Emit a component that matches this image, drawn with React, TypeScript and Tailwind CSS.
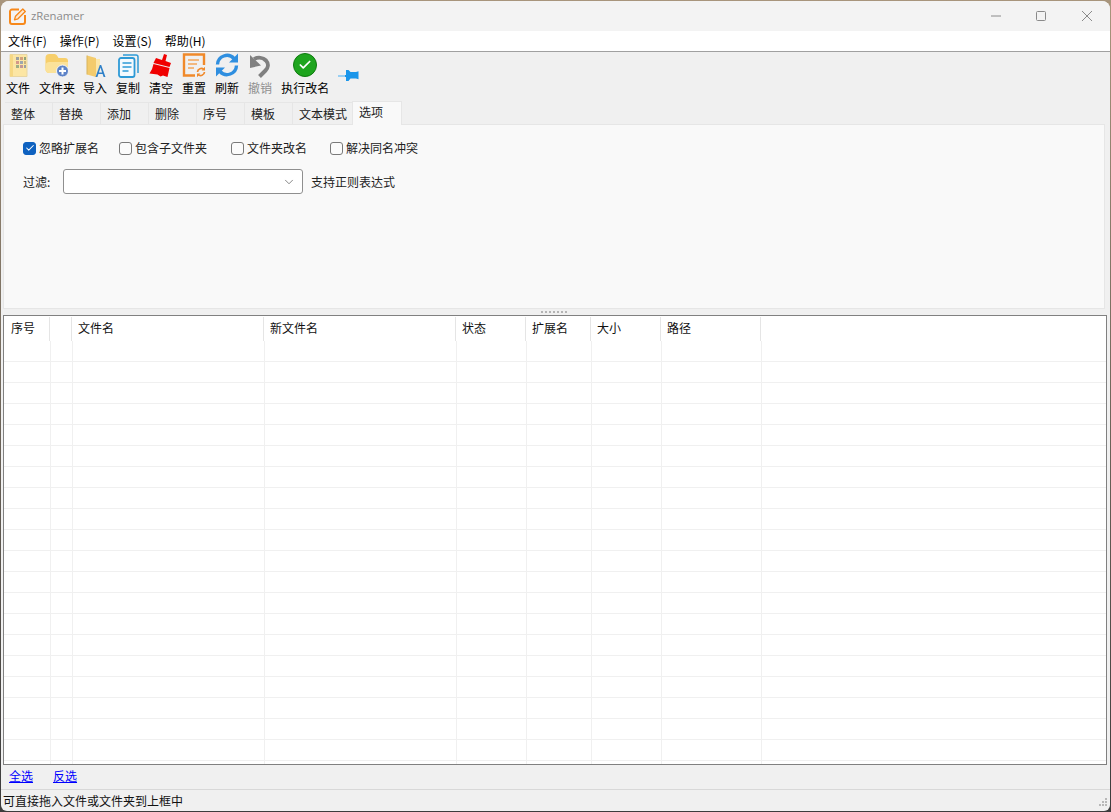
import { Check, ChevronDown } from 'lucide-react';

const cjk = "font-['Noto_Sans_CJK_SC','Noto_Sans',sans-serif]";

const tabs = ['整体', '替换', '添加', '删除', '序号', '模板'];

const headerCols = [
  { label: '序号', cls: 'w-[46px] pl-[7px]' },
  { label: '', cls: 'w-[22px] pl-[6px]' },
  { label: '文件名', cls: 'w-[192px] pl-[6px]' },
  { label: '新文件名', cls: 'w-[192px] pl-[6px]' },
  { label: '状态', cls: 'w-[70px] pl-[6px]' },
  { label: '扩展名', cls: 'w-[65px] pl-[6px]' },
  { label: '大小', cls: 'w-[70px] pl-[6px]' },
  { label: '路径', cls: 'w-[100px] pl-[6px]' },
];

const bodyCols = ['w-[47px]', 'w-[22px]', 'w-[192px]', 'w-[192px]', 'w-[70px]', 'w-[65px]', 'w-[70px]', 'w-[100px]'];

const rows = Array.from({ length: 21 }, (_, i) => i);

function AppLogo() {
  return (
    <svg width="17" height="17" viewBox="0 0 17 17" fill="none">
      <path d="M10 1.500H3A2 2 0 0 0 1 3.500V14a2 2 0 0 0 2 2h11a2 2 0 0 0 2-2V7" stroke="#f7881a" strokeWidth="2" />
      <path d="M13.800 1 6.500 8.300 5.500 11.800 9 10.800 16.300 3.500Z" fill="#fde7cf" stroke="#f7881a" strokeWidth="1.300" strokeLinejoin="round" />
    </svg>
  );
}

function FileIcon() {
  return (
    <svg width="24" height="26" viewBox="0 0 24 26">
      <path d="M4 2.500h17v22H4z" fill="#fce6a4" stroke="#e8d6a4" />
      <path d="M4 2.500h3v22H4z" fill="#f6d884" />
      <g opacity="0.75">
        <rect x="10" y="5" width="3" height="3" fill="#7c8aa0" />
        <rect x="14" y="5" width="3" height="3" fill="#c78a72" />
        <rect x="18" y="5" width="2" height="3" fill="#6f8f6a" />
        <rect x="10" y="9" width="3" height="3" fill="#c77f7f" />
        <rect x="14" y="9" width="3" height="3" fill="#7d93b5" />
        <rect x="18" y="9" width="2" height="3" fill="#b7a070" />
        <rect x="10" y="13" width="3" height="3" fill="#7f9d7b" />
        <rect x="14" y="13" width="3" height="3" fill="#b07f95" />
        <rect x="18" y="13" width="2" height="3" fill="#7c8aa0" />
      </g>
    </svg>
  );
}

function FolderIcon() {
  return (
    <svg width="26" height="26" viewBox="0 0 26 26">
      <path d="M1.500 6a4 4 0 0 1 4-4h5a3 3 0 0 1 2.500 1.500L14.500 6h6.500a3 3 0 0 1 3 3v12H5.500a4 4 0 0 1-4-4Z" fill="#f7cf6b" />
      <path d="M5.500 10H24v11H5.500a4 4 0 0 1-4-4v-3a4 4 0 0 1 4-4Z" fill="#fbe29a" />
      <circle cx="18.500" cy="19" r="6" fill="#5d83c8" stroke="#f4f4f4" strokeWidth="1" />
      <path d="M15 19h7M18.500 15.500v7" stroke="#fff" strokeWidth="2" />
    </svg>
  );
}

function ImportIcon() {
  return (
    <svg width="24" height="26" viewBox="0 0 24 26">
      <path d="M4 3.500 13 6v19l-9-2.500Z" fill="#f3cb6c" />
      <path d="M13 7h4v7l-4 9Z" fill="#fbe6a8" />
      <path d="M4 3.500v19" stroke="#d9b45c" strokeWidth="1" />
      <path d="M12.500 25 16.800 13h1.400L22.500 25h-1.900l-1-3h-4.200l-1 3Zm3.400-4.600h3.200L17.500 15.500Z" fill="#2f80c8" />
    </svg>
  );
}

function CopyIcon() {
  return (
    <svg width="24" height="26" viewBox="0 0 24 26" fill="none">
      <path d="M7 3h13a2 2 0 0 1 2 2v16" stroke="#2e9ad6" strokeWidth="1.500" />
      <rect x="3" y="6" width="15.500" height="19" rx="2" stroke="#2e9ad6" strokeWidth="1.800" fill="#f4fafe" />
      <path d="M6.500 11h9M6.500 15h9M6.500 19h6" stroke="#2e9ad6" strokeWidth="1.600" />
    </svg>
  );
}

function BroomIcon() {
  return (
    <svg width="24" height="26" viewBox="0 0 24 26">
      <path d="M13 8 15 2 18 3 16.500 9 22 11 20.500 15 4.500 11 7 6Z" fill="#f00000" />
      <path d="M4.500 12 20.500 16 18.500 25 14 23.500 11.500 24.500 8.500 22.500 0.500 21.500Q3.500 17.500 4.500 12Z" fill="#f00000" />
    </svg>
  );
}

function ResetIcon() {
  return (
    <svg width="24" height="26" viewBox="0 0 24 26" fill="none">
      <path d="M22 13V2.500H2v21h11" stroke="#f0892a" strokeWidth="2.400" />
      <path d="M6 8h11M6 12h9M6 16h6" stroke="#f4a558" strokeWidth="1.600" />
      <path d="M15.500 20a3.800 3.800 0 0 1 6.400-2.500M22.500 20a3.800 3.800 0 0 1-6.400 2.500" stroke="#f0892a" strokeWidth="1.700" />
      <path d="M23 14.800v3.600h-3.400zM15 25.200v-3.600h3.400z" fill="#f0892a" />
    </svg>
  );
}

function RefreshIcon() {
  return (
    <svg width="24" height="26" viewBox="0 0 24 26" fill="none">
      <path d="M2.500 12.500A9.500 9.500 0 0 1 19 6.500" stroke="#2f8fe0" strokeWidth="3.400" />
      <path d="M21.500 13.500A9.500 9.500 0 0 1 5 19.500" stroke="#2f8fe0" strokeWidth="3.400" />
      <path d="M23 1.500v9h-9zM1 24.500v-9h9z" fill="#2f8fe0" />
    </svg>
  );
}

function UndoIcon() {
  return (
    <svg width="24" height="26" viewBox="0 0 24 26" fill="none">
      <path d="M6 7c4-2 9-1.500 12 1.500 3 3.200 2 7.500-.5 10l-6 6" stroke="#808080" strokeWidth="4" />
      <path d="M2 3V16L13 13.500Z" fill="#808080" />
    </svg>
  );
}

function PinIcon() {
  return (
    <svg width="22" height="12" viewBox="0 0 22 12">
      <path d="M0 6h9" stroke="#7cc4f5" strokeWidth="1.400" />
      <path d="M7 6h6" stroke="#1a96ea" strokeWidth="2" />
      <path d="M8 0h2.500l2 2H18l2.500-.8v8L18 8.500h-5.500l-2 2.500H8Z" fill="#1a96ea" />
    </svg>
  );
}

function ToolButton({ icon, label, muted, cls }: { icon: React.ReactNode; label: string; muted?: boolean; cls?: string }) {
  return (
    <div className={`flex flex-col items-center ${cls ?? ''}`}>
      <div className="h-[26px] flex items-center justify-center">{icon}</div>
      <span className={`mt-[1px] text-[12px] leading-[18px] ${muted ? 'text-[#8f8f8f]' : 'text-black'}`}>{label}</span>
    </div>
  );
}

function Option({ label, checked, cls }: { label: string; checked?: boolean; cls: string }) {
  return (
    <div className={`flex items-center ${cls}`}>
      <span
        className={`w-[13px] h-[13px] rounded-[3px] flex items-center justify-center border ${
          checked ? 'bg-[#0f62c0] border-[#0f62c0]' : 'bg-[#fbfbfb] border-[#7a7a7a]'
        }`}
      >
        {checked && <Check size={10} strokeWidth={2.5} color="#ffffff" />}
      </span>
      <span className="ml-[3px] text-[12px] text-[#222]">{label}</span>
    </div>
  );
}

export default function App() {
  return (
    <div
      className={`w-[1111px] h-[812px] bg-linear-to-b from-[#a8957c] to-[#3c3c3c] overflow-hidden pt-[1px] px-[1px] pb-[1px] ${cjk}`}
    >
      <div className="w-full h-full rounded-t-[8px] rounded-b-[6px] overflow-hidden bg-[#f0f0f0] flex flex-col">
        {/* title bar */}
        <div className="h-[30px] shrink-0 bg-[#f3f3f3] flex items-center pl-[8px]">
          <AppLogo />
          <span className="ml-[5px] text-[11.3px] text-[#8b8b8b] font-['Open_Sans',sans-serif]">zRenamer</span>
          <div className="ml-auto flex items-center -mt-[1px]">
            <svg width="10" height="2" viewBox="0 0 10 2" className="mr-[35px]">
              <path d="M0 1h10" stroke="#8a8a8a" />
            </svg>
            <svg width="10" height="10" viewBox="0 0 10 10" className="mr-[36px]">
              <rect x="0.5" y="0.5" width="9" height="9" rx="1" fill="none" stroke="#8a8a8a" />
            </svg>
            <svg width="10" height="10" viewBox="0 0 10 10" className="mr-[18px]">
              <path d="M0 0l10 10M10 0 0 10" stroke="#8a8a8a" />
            </svg>
          </div>
        </div>

        {/* menu */}
        <div className="h-[21px] shrink-0 bg-white border-b border-[#a0a0a0] flex items-center pl-[7px] gap-[13px] text-[12px] text-black">
          <span>文件(F)</span>
          <span>操作(P)</span>
          <span>设置(S)</span>
          <span>帮助(H)</span>
        </div>

        {/* toolbar */}
        <div className="h-[48px] shrink-0 flex items-start pl-[5px] gap-[9px]">
          <ToolButton icon={<FileIcon />} label="文件" />
          <ToolButton icon={<FolderIcon />} label="文件夹" />
          <ToolButton icon={<ImportIcon />} label="导入" cls="-ml-[1px]" />
          <ToolButton icon={<CopyIcon />} label="复制" />
          <ToolButton icon={<BroomIcon />} label="清空" />
          <ToolButton icon={<ResetIcon />} label="重置" />
          <ToolButton icon={<RefreshIcon />} label="刷新" />
          <ToolButton icon={<UndoIcon />} label="撤销" muted />
          <ToolButton
            icon={
              <span className="w-[24px] h-[24px] rounded-full bg-[#1ea51e] border border-[#0f7a0f] flex items-center justify-center">
                <Check size={14} strokeWidth={3} color="#ffffff" />
              </span>
            }
            label="执行改名"
          />
          <div className="mt-[18px]">
            <PinIcon />
          </div>
        </div>

        {/* tabs */}
        <div className="h-[24px] shrink-0 flex items-end pl-[4px] text-[12px] text-[#222]">
          {tabs.map((t) => (
            <div
              key={t}
              className="w-[48px] h-[22px] bg-[#f0f0f0] border-t border-r border-[#e6e6e6] pl-[6px] leading-[22px]"
            >
              {t}
            </div>
          ))}
          <div className="w-[59px] h-[22px] bg-[#f0f0f0] border-t border-[#e6e6e6] pl-[6px] leading-[22px] whitespace-nowrap">
            文本模式
          </div>
          <div className="w-[50px] h-[24px] bg-[#f9f9f9] border-t border-x border-[#e6e6e6] pl-[6px] leading-[19px] -mb-[1px] relative">
            选项
          </div>
        </div>

        {/* options panel */}
        <div className="h-[185px] shrink-0 ml-[2px] mr-[5px] bg-[#f9f9f9] border border-[#e6e6e6] pl-[19px] pt-[14px]">
          <div className="flex items-center h-[18px]">
            <Option label="忽略扩展名" checked cls="w-[96px]" />
            <Option label="包含子文件夹" cls="w-[112px]" />
            <Option label="文件夹改名" cls="w-[99px]" />
            <Option label="解决同名冲突" cls="w-[100px]" />
          </div>
          <div className="flex items-center mt-[12px] text-[12px] text-[#222]">
            <span className="w-[40px]">过滤:</span>
            <div className="w-[240px] h-[25px] bg-white border border-[#8f8f8f] rounded-[3px] flex items-center justify-end pr-[6px]">
              <ChevronDown size={14} strokeWidth={1.2} color="#555555" />
            </div>
            <span className="ml-[8px]">支持正则表达式</span>
          </div>
        </div>

        {/* splitter */}
        <div className="h-[6px] shrink-0 flex items-center justify-center pr-[2px]">
          <div className="w-[28px] h-[2px] bg-[repeating-linear-gradient(90deg,#b4b4b4_0,#b4b4b4_2px,transparent_2px,transparent_4px)]" />
        </div>

        {/* file list */}
        <div className="h-[450px] shrink-0 ml-[2px] mr-[3px] bg-white border border-[#808080] overflow-hidden text-[12px] text-[#111]">
          <div className="h-[25px] flex">
            {headerCols.map((c, i) => (
              <div key={i} className={`${c.cls} h-[24px] mt-[1px] border-r border-[#e5e5e5] leading-[22px] shrink-0`}>
                {c.label}
              </div>
            ))}
          </div>
          {rows.map((r) => (
            <div key={r} className="h-[21px] flex border-b border-[#f0f0f0]">
              {bodyCols.map((w, i) => (
                <div key={i} className={`${w} h-full border-r border-[#f0f0f0] shrink-0`} />
              ))}
            </div>
          ))}
        </div>

        {/* links */}
        <div className="h-[25px] shrink-0 flex items-start pl-[8px] gap-[20px] text-[12px] leading-[22px] text-[#0000ff] underline border-b border-[#d8d8d8]">
          <span>全选</span>
          <span>反选</span>
        </div>

        {/* status bar */}
        <div className="flex-1 flex items-center pl-[2px] text-[12px] text-[#111] relative">
          <span>可直接拖入文件或文件夹到上框中</span>
          <svg width="11" height="11" viewBox="0 0 11 11" className="absolute right-[2px] bottom-[2px]">
            <g fill="#b8b8b8">
              <rect x="8" y="0" width="2" height="2" />
              <rect x="5" y="3" width="2" height="2" />
              <rect x="8" y="3" width="2" height="2" />
              <rect x="2" y="6" width="2" height="2" />
              <rect x="5" y="6" width="2" height="2" />
              <rect x="8" y="6" width="2" height="2" />
            </g>
          </svg>
        </div>
      </div>
    </div>
  );
}
